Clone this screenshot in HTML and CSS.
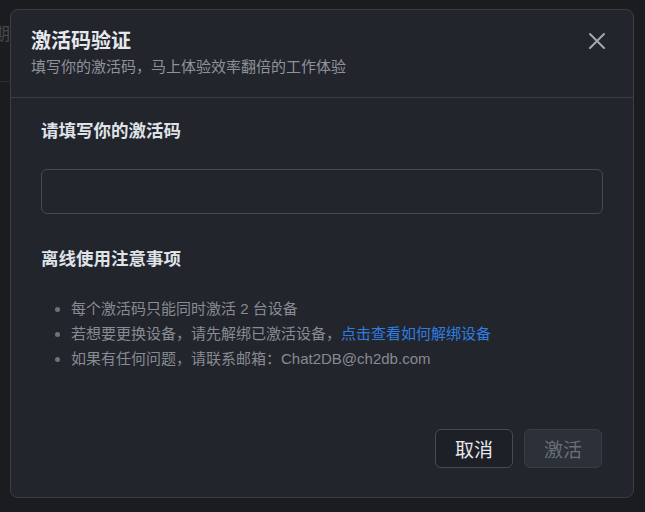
FILE: index.html
```html
<!DOCTYPE html>
<html lang="zh-CN">
<head>
    <meta charset="UTF-8">
    <meta name="viewport" content="width=device-width, initial-scale=1.0">
    <title>激活码验证</title>
    <link rel="stylesheet" href="styles.css">
</head>
<body>
    <div class="backdrop">
        <span class="bg-text">期</span>
        <div class="bg-line"></div>
    </div>
    <div class="modal">
        <div class="modal-header">
            <div>
                <h2 class="modal-title">激活码验证</h2>
                <p class="modal-sub">填写你的激活码，马上体验效率翻倍的工作体验</p>
            </div>
            <button class="close-btn" aria-label="关闭">
                <svg width="18" height="18" viewBox="0 0 18 18">
                    <path d="M2 2 L16 16 M16 2 L2 16" stroke="#a3a7ae" stroke-width="2" stroke-linecap="round"/>
                </svg>
            </button>
        </div>
        <div class="modal-body">
            <h3 class="section-title">请填写你的激活码</h3>
            <input type="text" class="code-input">
            <h3 class="section-title notes-title">离线使用注意事项</h3>
            <ul class="notes">
                <li>每个激活码只能同时激活 2 台设备</li>
                <li>若想要更换设备，请先解绑已激活设备，<a href="#">点击查看如何解绑设备</a></li>
                <li>如果有任何问题，请联系邮箱：Chat2DB@ch2db.com</li>
            </ul>
        </div>
        <div class="modal-footer">
            <button class="btn btn-cancel">取消</button>
            <button class="btn btn-ok" disabled>激活</button>
        </div>
    </div>
</body>
</html>
```

FILE: styles.css
```css
body {
    margin: 0;
    background-color: #1b1c1f;
    font-family: "Liberation Sans", "Noto Sans CJK SC", sans-serif;
    width: 645px;
    height: 512px;
    overflow: hidden;
    position: relative;
}

.backdrop {
    position: absolute;
    inset: 0;
}

.bg-text {
    position: absolute;
    left: -7px;
    top: 20px;
    font-size: 17px;
    color: #46484c;
}

.bg-line {
    position: absolute;
    left: 0;
    top: 81px;
    width: 10px;
    height: 1px;
    background-color: #2c2e32;
}

.modal {
    position: absolute;
    left: 10px;
    top: 9px;
    width: 622px;
    height: 487px;
    background-color: #22252c;
    border: 1px solid #3a3d44;
    border-radius: 8px;
    display: flex;
    flex-direction: column;
}

.modal-header {
    display: flex;
    justify-content: space-between;
    align-items: flex-start;
    padding: 17px 20px 0 20px;
    height: 70px;
    border-bottom: 1px solid #3a3d44;
}

.modal-title {
    margin: 0;
    font-size: 20px;
    font-weight: bold;
    color: #e6e8ec;
    line-height: 28px;
}

.modal-sub {
    margin: 2px 0 0 0;
    font-size: 15px;
    color: #8e939b;
    line-height: 20px;
}

.close-btn {
    background: none;
    border: none;
    padding: 0;
    margin-top: 5px;
    margin-right: 7px;
    cursor: pointer;
}

.modal-body {
    padding: 21px 30px 0 30px;
    flex: 1;
}

.section-title {
    margin: 0;
    font-size: 17.5px;
    font-weight: bold;
    color: #dfe2e7;
    line-height: 24px;
}

.code-input {
    display: block;
    width: 562px;
    height: 45px;
    margin-top: 26px;
    background: #22252c;
    border: 1px solid #474a52;
    border-radius: 6px;
    box-sizing: border-box;
    outline: none;
}

.notes-title {
    margin-top: 33px;
}

.notes {
    margin: 25px 0 0 0;
    padding-left: 30px;
    font-size: 15px;
    color: #878b93;
    line-height: 25px;
}

.notes li::marker {
    color: #6e727a;
}

.notes a {
    color: #2f7de1;
    text-decoration: none;
}

.modal-footer {
    display: flex;
    justify-content: flex-end;
    gap: 11px;
    padding: 0 31px 29px 0;
}

.btn {
    width: 78px;
    height: 39px;
    border-radius: 6px;
    font-size: 19px;
    font-family: "Noto Sans CJK SC", sans-serif;
    cursor: pointer;
    padding: 0;
}

.btn-cancel {
    background-color: #1d2026;
    border: 1px solid #474a52;
    color: #e6e8ec;
}

.btn-ok {
    background-color: #2c3038;
    border: 1px solid #383c44;
    color: #6a6e76;
    cursor: not-allowed;
}
```
